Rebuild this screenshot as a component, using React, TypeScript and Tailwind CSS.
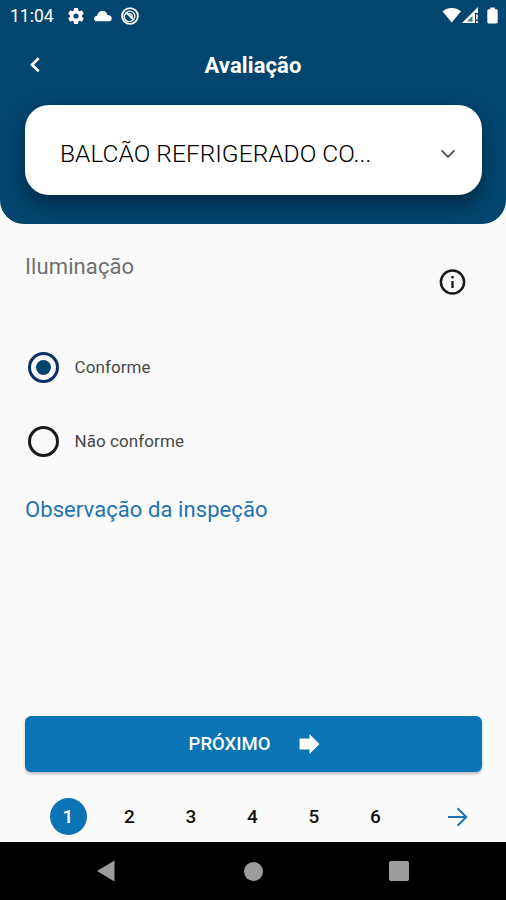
import type { ReactNode } from "react";

function StatusBar() {
  return (
    <div className="flex h-8 items-center pr-[6px] pl-[10px] text-white">
      <span className="w-[58px] text-[17.5px] leading-8 tracking-[0px]">11:04</span>
      <svg className="h-[16px] w-[16px]" viewBox="2.400 2.400 19.200 19.200" fill="currentColor">
        <path d="M19.14 12.94c.04-.3.06-.61.06-.94s-.02-.64-.07-.94l2.03-1.58c.18-.14.23-.41.12-.61l-1.92-3.32c-.12-.22-.37-.29-.59-.22l-2.39.96c-.5-.38-1.03-.7-1.62-.94l-.36-2.54c-.04-.24-.24-.41-.48-.41h-3.84c-.24 0-.43.17-.47.41l-.36 2.54c-.59.24-1.13.57-1.62.94l-2.39-.96c-.22-.08-.47 0-.59.22L2.74 8.87c-.12.21-.08.47.12.61l2.03 1.58c-.05.3-.09.63-.09.94s.02.64.07.94l-2.03 1.58c-.18.14-.23.41-.12.61l1.92 3.32c.12.22.37.29.59.22l2.39-.96c.5.38 1.03.7 1.62.94l.36 2.54c.05.24.24.41.48.41h3.84c.24 0 .44-.17.47-.41l.36-2.54c.59-.24 1.13-.56 1.62-.94l2.39.96c.22.08.47 0 .59-.22l1.92-3.32c.12-.22.07-.47-.12-.61l-2.01-1.58zM12 15.1A3.1 3.1 0 1 1 12 8.900a3.1 3.1 0 0 1 0 6.200z" />
      </svg>
      <svg className="ml-[10px] h-[18px] w-[18px]" viewBox="0 0 18 18" fill="currentColor">
        <path d="M3.200 14.300C1.300 14.300 0 13.200 0 11.700s1-2.500 2.800-2.700C3.600 6.300 5.600 3.800 8.300 3.800c2.800 0 4.500 1.600 5.200 4.300 2.700.2 4.300 1.500 4.300 3.300 0 1.700-1.300 2.900-3.300 2.900z" />
      </svg>
      <svg className="ml-[9px] h-[18px] w-[18px]" viewBox="0 0 18 18" fill="none" stroke="currentColor">
        <circle cx="9" cy="9" r="7.900" strokeWidth="1.900" />
        <path d="M5.300 5.700A5 5 0 1 0 12.300 12.700M6.500 4.700A5 5 0 0 1 13.200 11.500" strokeWidth="1.300" />
        <path d="M5 5l8 8" strokeWidth="2.200" />
        <path d="M8 6.500a3 3 0 0 1 3.300 3.300" strokeWidth="1.200" />
      </svg>
      <svg className="ml-auto h-[18px] w-[20px]" viewBox="0 0 20 18" fill="currentColor">
        <path d="M1.500 4.300C6.500-.2 15-.2 20 4.300L10.700 15.500z" />
      </svg>
      <svg className="ml-[1px] h-[18px] w-[17px]" viewBox="0 0 17 18">
        <path d="M0 16L16 0v6h-3v10z" fill="currentColor" />
        <path d="M5 14.500l5.500-5.500v5.500z" fill="#02456f" opacity=".75" />
        <path d="M11.800 7v8M14.900 7.500v5M14.900 14v2" stroke="currentColor" strokeWidth="1.700" />
      </svg>
      <svg className="mr-[2px] mb-px ml-[8px] h-[17px] w-[11px]" viewBox="0 0 11 18" fill="currentColor">
        <path d="M3 .5h5v2h1.500q1.500 0 1.500 1.500v12q0 1.500-1.500 1.500h-8Q0 17.500 0 16V4q0-1.500 1.500-1.500H3z" />
      </svg>
    </div>
  );
}

function Header() {
  return (
    <header className="h-[224px] shrink-0 rounded-b-[24px] bg-[#02456f]">
      <StatusBar />
      <div className="grid h-[73px] grid-cols-[70px_1fr_70px] items-center pb-[7px]">
        <svg className="ml-[29px] h-[16px] w-[12px]" viewBox="0 0 12 16" fill="none" stroke="white" strokeWidth="2.700">
          <path d="M9.700 1.200L3 7.700l6.700 6.500" />
        </svg>
        <h1 className="pt-px text-center text-[22px] leading-7 font-bold tracking-[0.100px] text-white">Avaliação</h1>
      </div>
      <button className="mx-[25px] flex h-[90px] w-[457px] items-center rounded-[24px] bg-white pr-[26px] pl-[35px] text-left shadow-[0_10px_20px_rgba(0,0,0,0.38)]">
        <span className="pt-[8px] text-[24.5px] leading-8 font-light tracking-[0.030px] whitespace-nowrap text-black">BALCÃO REFRIGERADO CO...</span>
        <svg className="mt-[7px] ml-auto h-[12px] w-[16px]" viewBox="0 0 16 12" fill="none" stroke="#555" strokeWidth="1.900">
          <path d="M1.500 2.300L8 8.800l6.500-6.500" />
        </svg>
      </button>
    </header>
  );
}

function Option({ label, selected = false }: { label: string; selected?: boolean }) {
  return (
    <label className="flex h-[74px] items-center pl-[3px]">
      <span className={selected ? "flex h-[31px] w-[31px] items-center justify-center rounded-full border-[3px] border-[#0a2f69]" : "h-[31px] w-[31px] rounded-full border-[3px] border-[#1a1a1a]"}>
        {selected && <span className="h-[15px] w-[15px] rounded-full bg-[#02456f]" />}
      </span>
      <span className="ml-[15.5px] text-[17px] leading-6 tracking-[0.080px] text-[#484848]">{label}</span>
    </label>
  );
}

function PageNumber({ children, active = false }: { children: ReactNode; active?: boolean }) {
  return (
    <span className={active ? "flex h-[37px] w-[37px] items-center justify-center rounded-full bg-[#0b74b5] text-white" : "flex h-[37px] w-[37px] items-center justify-center text-[#111]"}>
      {children}
    </span>
  );
}

export default function App() {
  return (
    <div className="flex h-[900px] w-[506px] flex-col overflow-hidden bg-[#fafafa] font-[Roboto,sans-serif]">
      <Header />
      <main className="flex flex-1 flex-col pr-[24px] pl-[25px]">
        <div className="flex h-[106px] items-start justify-between pt-[28px]">
          <h2 className="pt-px text-[22px] leading-7 tracking-[0.100px] text-[#707070]">Iluminação</h2>
          <svg className="mt-[17px] mr-[16px] h-[27px] w-[27px]" viewBox="0 0 27 27" fill="none" stroke="#1a1a1a" strokeWidth="2.500">
            <circle cx="13.500" cy="13" r="11.600" />
            <path d="M13.500 12v7M13.500 7v2.500" strokeWidth="2.300" />
          </svg>
        </div>
        <Option label="Conforme" selected />
        <Option label="Não conforme" />
        <a className="mt-[18px] text-[22px] leading-7 tracking-[0.080px] text-[#2272b5]">Observação da inspeção</a>
        <button className="mt-auto flex h-[56px] items-center justify-center rounded-[6px] bg-[#0b74b5] pl-[2px] text-white shadow-[0_2px_3px_rgba(0,0,0,0.25)]">
          <span className="text-[18.5px] leading-6 font-medium">PRÓXIMO</span>
          <svg className="ml-[29px] h-[20px] w-[21px]" viewBox="0 0 21 20" fill="currentColor">
            <path d="M.5 4.500H10.500V0l10 10L10.500 20v-4.500H.5z" />
          </svg>
        </button>
        <nav className="flex h-[70px] items-center gap-[24.500px] pt-[19px] pl-[24.500px] text-[19px] leading-6 font-medium">
          <PageNumber active>1</PageNumber>
          <PageNumber>2</PageNumber>
          <PageNumber>3</PageNumber>
          <PageNumber>4</PageNumber>
          <PageNumber>5</PageNumber>
          <PageNumber>6</PageNumber>
          <svg className="mr-[14px] ml-auto h-[20px] w-[21px]" viewBox="0 0 21 20" fill="none" stroke="#2272b5" strokeWidth="2">
            <path d="M1 10h18M10.500 1.200L19.300 10l-8.800 8.800" />
          </svg>
        </nav>
      </main>
      <footer className="flex h-[58px] shrink-0 items-center justify-between bg-black pr-[97px] pl-[96px]">
        <svg className="h-[22px] w-[20px]" viewBox="0 0 20 22">
          <path d="M1 11L18.500.5v21z" fill="#9d9d9d" />
        </svg>
        <span className="mr-px ml-[2px] h-[19px] w-[19px] rounded-full bg-[#9d9d9d]" />
        <span className="h-[20px] w-[20px] rounded-[2px] bg-[#9d9d9d]" />
      </footer>
    </div>
  );
}
